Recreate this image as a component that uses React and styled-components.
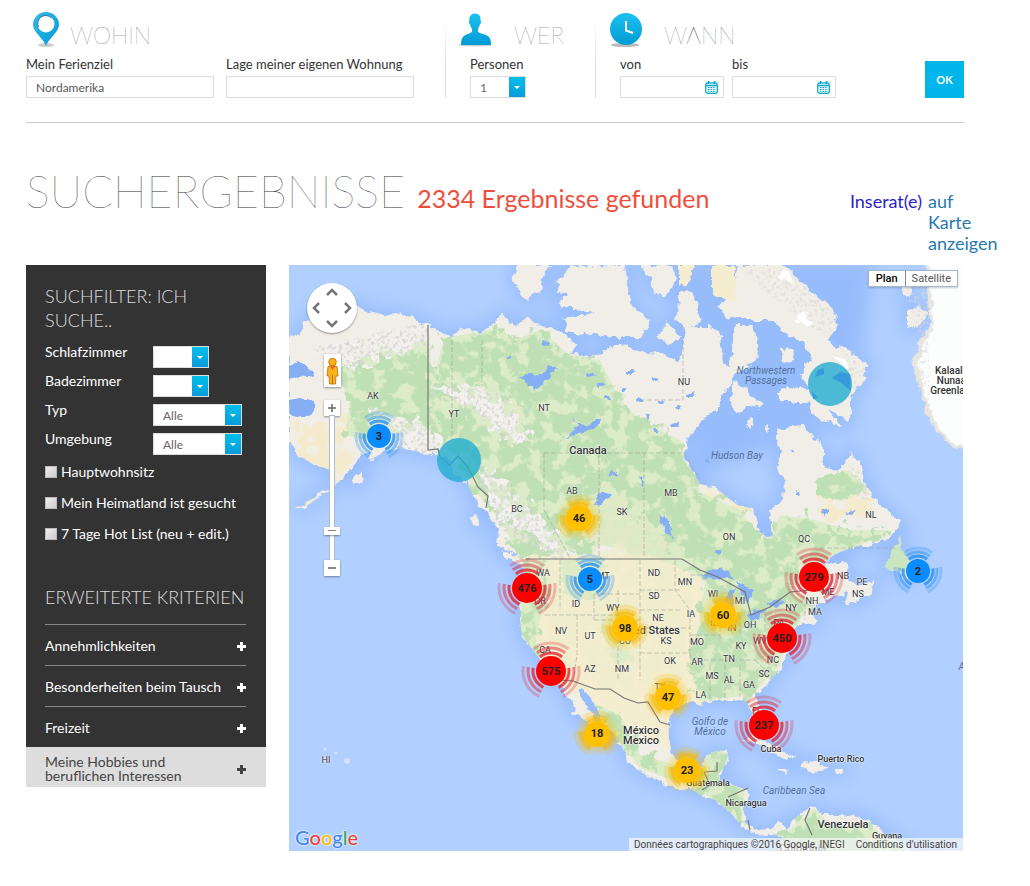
import React from 'react';
import styled, { createGlobalStyle } from 'styled-components';

const GlobalStyle = createGlobalStyle`
  *, *::before, *::after { box-sizing: border-box; }
  body { margin: 0; background: #fff; color: #333; font-family: Lato, "Open Sans", sans-serif; font-size: 13px; }
  button, input, select { font: inherit; color: inherit; }
`;

const Page = styled.div`
  padding: 12px 0 35px 26px;
`;

const SearchBar = styled.form`
  display: flex;
  align-items: flex-end;
  margin-right: 66px;
  padding-bottom: 24px;
  border-bottom: 1px solid #ccc;
`;

const Group = styled.fieldset`
  margin: 0;
  min-width: 0;
  border: 0;
  padding: 0 ${p => p.$end || 0}px 0 ${p => p.$start || 0}px;
  background: ${p => (p.$start ? 'linear-gradient(#fff 10%, #ddd 60%) left / 1px 100% no-repeat' : 'none')};
`;

const GroupHead = styled.div`
  display: flex;
  align-items: flex-start;
  gap: ${p => p.$gap}px;
  height: 44px;
`;

const GroupTitle = styled.h2`
  margin: 8px 0 0;
  font-size: 23px;
  line-height: 30px;
  font-weight: 100;
`;

const Fields = styled.div`
  display: flex;
  gap: ${p => p.$gap || 0}px;
  padding-left: ${p => p.$inset || 0}px;
`;

const Field = styled.div`
  display: flex;
  flex-direction: column;
  width: ${p => p.$w}px;
`;

const FieldLabel = styled.label`
  height: 20px;
  line-height: 16px;
  white-space: nowrap;
`;

const TextBox = styled.input`
  width: 100%;
  height: 22px;
  padding: 0 9px;
  border: 1px solid #ddd;
  background: #fff;
  color: #555;
  font-size: 12px;
  outline: none;
`;

const DateBox = styled.div`
  display: flex;
  align-items: center;
  height: 22px;
  padding-right: 5px;
  border: 1px solid #ddd;
  input { flex: 1; min-width: 0; height: 20px; border: 0; outline: none; background: none; }
`;

const PlainButton = styled.button`
  display: flex;
  padding: 0;
  border: 0;
  background: none;
`;

const SelectShell = styled.div`
  position: relative;
  width: ${p => p.$w}px;
  height: 22px;
`;

const Select = styled.select`
  appearance: none;
  width: 100%;
  height: 22px;
  padding: 0 20px 0 9px;
  border: 1px solid #ddd;
  border-radius: 0;
  background: #fff;
  color: #666;
  font-size: 12px;
  outline: none;
`;

const SelectArrow = styled.span`
  position: absolute;
  top: 1px;
  right: 1px;
  display: flex;
  align-items: center;
  justify-content: center;
  width: 16px;
  height: 20px;
  background: linear-gradient(#00bfeb, #0a9bd8);
  pointer-events: none;
  &::after { content: ''; border: 3px solid transparent; border-top-color: #fff; border-bottom: 0; }
`;

const OkButton = styled.button`
  width: 39px;
  height: 37px;
  margin-left: auto;
  padding: 0;
  border: 0;
  background: #00b5e9;
  color: #fff;
  font-size: 11px;
  font-weight: 700;
`;

const ResultHead = styled.header`
  display: flex;
  align-items: baseline;
  margin: 40px 31px 14px 0;
  height: 88px;
`;

const ResultTitle = styled.h1`
  margin: 0 12px 0 0;
  font-size: 45px;
  line-height: 56px;
  font-weight: 100;
`;

const ResultCount = styled.p`
  margin: 0 auto 0 0;
  color: #ee4f3d;
  font-size: 25px;
  white-space: nowrap;
`;

const MapLinks = styled.p`
  display: flex;
  gap: 6px;
  margin: 0;
  padding-bottom: 4px;
  font-size: 18px;
  line-height: 21px;
`;

const MapLink = styled.a`
  width: ${p => (p.$w ? `${p.$w}px` : 'auto')};
  color: ${p => p.$color};
  text-decoration: none;
`;

const Content = styled.main`
  display: flex;
  align-items: flex-start;
  gap: 23px;
  margin-right: 67px;
`;

const Sidebar = styled.aside`
  flex: 0 0 240px;
  background: #333;
  color: #fff;
`;

const Filters = styled.form`
  padding: 19px 20px 0 19px;
`;

const SideTitle = styled.h2`
  margin: 0;
  font-size: 18px;
  line-height: 24px;
  font-weight: 300;
  color: #ddd;
`;

const FilterRows = styled.div`
  display: grid;
  gap: 7px;
  margin: 14px 0 1px;
`;

const FilterRow = styled.div`
  display: grid;
  grid-template-columns: 108px auto;
  height: 22px;
  label { line-height: 12px; font-size: 14px; }
`;

const Check = styled.label`
  display: flex;
  align-items: center;
  gap: 3px;
  height: 31px;
  font-size: 14px;
  white-space: nowrap;
`;

const CheckBox = styled.input`
  appearance: none;
  width: 12px;
  height: 12px;
  margin: 0 1px 0 0;
  border: 1px solid #bbb;
  background: linear-gradient(135deg, #eee, #ccc);
`;

const Criteria = styled.section`
  padding: 36px 20px 0 19px;
`;

const CriteriaList = styled.div`
  margin-top: 15px;
`;

const Accordion = styled.button`
  display: flex;
  align-items: center;
  justify-content: space-between;
  width: 100%;
  height: ${p => (p.$light ? 40 : 41)}px;
  padding: ${p => (p.$light ? '4px 20px 0 19px' : '2px 0 0')};
  border: 0;
  border-top: ${p => (p.$light ? '0' : '1px solid #888')};
  background: ${p => (p.$light ? '#ddd' : 'none')};
  color: ${p => (p.$light ? '#444' : '#fff')};
  font-size: 14px;
  line-height: 14px;
  text-align: left;
  white-space: nowrap;
`;

const MapFrame = styled.section`
  position: relative;
  flex: 1;
  min-width: 0;
  aspect-ratio: 674 / 586;
  overflow: hidden;
  background: #b3d1ff;
  font-family: Roboto, sans-serif;
  > svg { display: block; width: 100%; height: 100%; }
`;

const onMap = p => `
  position: absolute;
  left: ${((p.$x - 289) / 674) * 100}%;
  top: ${((p.$y - 265) / 586) * 100}%;
  transform: translate(-50%, -50%);
`;

const MapLabel = styled.span`
  ${onMap}
  color: ${p => (p.$kind === 'sea' ? '#54709c' : '#333')};
  font-size: ${p => ({ state: 9, town: 9, sea: 10, land: 10, country: 11 }[p.$kind])}px;
  font-style: ${p => (p.$kind === 'sea' ? 'italic' : 'normal')};
  font-weight: ${p => (p.$kind === 'state' || p.$kind === 'sea' ? 400 : 500)};
  line-height: 10px;
  text-align: center;
  text-shadow: ${p => (p.$kind === 'sea' ? 'none' : '0 0 2px #fff, 0 0 2px #fff')};
  white-space: pre;
`;

const ClusterPin = styled.button`
  ${onMap}
  width: 66px;
  height: 66px;
  padding: 0;
  border: 0;
  background: none;
  color: #222;
  font-size: 11px;
  font-weight: 700;
  svg { position: absolute; inset: 0; }
  span { position: relative; }
`;

const MapTypes = styled.div`
  position: absolute;
  top: 5px;
  right: 5px;
  display: flex;
  border: 1px solid #a5b5cc;
  background: #fff;
  box-shadow: 0 1px 2px #0003;
`;

const MapType = styled.button`
  height: 15px;
  padding: 0 ${p => (p.$active ? 7 : 6)}px;
  border: 0;
  border-left: ${p => (p.$active ? 0 : '1px solid #888')};
  background: none;
  color: ${p => (p.$active ? '#000' : '#555')};
  font-size: 11px;
  line-height: 15px;
  font-weight: ${p => (p.$active ? 500 : 400)};
`;

const MapTools = styled.div`
  position: absolute;
  top: 18px;
  left: 18px;
  display: flex;
  flex-direction: column;
  align-items: center;
  width: 50px;
`;

const PanPad = styled.div`
  display: grid;
  grid-template-columns: repeat(3, 15px);
  grid-template-rows: repeat(3, 15px);
  place-items: center;
  place-content: center;
  width: 50px;
  height: 50px;
  border-radius: 50%;
  background: #fff;
  box-shadow: 0 1px 2px #0006;
`;

const PanButton = styled(PlainButton)`
  grid-area: ${p => p.$area};
`;

const Pegman = styled(PlainButton)`
  justify-content: center;
  align-items: center;
  width: 17px;
  height: 33px;
  margin: 21px 0 13px;
  background: #fff;
  box-shadow: 0 1px 2px #0006;
`;

const ZoomButton = styled(PlainButton)`
  justify-content: center;
  align-items: center;
  width: 16px;
  height: 16px;
  background: #fff;
  box-shadow: 0 1px 2px #0006;
`;

const ZoomSlider = styled.input`
  appearance: none;
  writing-mode: vertical-lr;
  direction: rtl;
  width: 16px;
  height: 144px;
  margin: 0;
  background: none;
  &::-webkit-slider-runnable-track { width: 4px; background: #fff; box-shadow: 0 0 0 1px #a9bcd2; }
  &::-webkit-slider-thumb { appearance: none; width: 16px; height: 8px; margin-left: -6px; background: linear-gradient(#888, #888) center / 8px 1px no-repeat #fff; box-shadow: 0 1px 2px #0006; }
`;

const GoogleLogo = styled.a`
  position: absolute;
  left: 6px;
  bottom: 0;
  font-family: Lato, sans-serif;
  font-size: 20px;
  line-height: 28px;
  font-weight: 500;
  text-decoration: none;
  text-shadow: 0 0 2px #fff, 0 0 2px #fff;
`;

const Letter = styled.span`
  color: ${p => p.$c};
`;

const Credit = styled.div`
  position: absolute;
  right: 0;
  bottom: 0;
  display: flex;
  gap: 11px;
  height: 13px;
  padding: 0 6px 0 5px;
  background: #f5f5f5bb;
  color: #444;
  font-size: 10px;
  line-height: 13px;
  white-space: nowrap;
  a { color: inherit; text-decoration: none; }
`;

const PinIcon = () => (
  <svg width="36" height="36" viewBox="0 0 36 36" aria-hidden="true">
    <defs><linearGradient id="pinFill" x2="1" y2="1"><stop stopColor="#35bce9" /><stop offset="1" stopColor="#0099d4" /></linearGradient></defs>
    <ellipse cx="20" cy="33" rx="8" ry="2" fill="#bbb" opacity=".7" />
    <path d="M20 34C17 26 7 20 7 12.500a13 12.500 0 0 1 26 0C33 20 23 26 20 34Z" fill="url(#pinFill)" />
    <circle cx="20" cy="12" r="8.500" fill="#fff" />
    <path d="M12.500 15a8 8 0 0 1 13-9" fill="none" stroke="#2b6f96" strokeWidth="1" />
  </svg>
);

const PersonIcon = () => (
  <svg width="36" height="36" viewBox="0 0 36 36" aria-hidden="true">
    <defs><linearGradient id="manFill" x2="0" y2="1"><stop stopColor="#1bc1ee" /><stop offset="1" stopColor="#009bd6" /></linearGradient></defs>
    <ellipse cx="18" cy="33" rx="17" ry="1.500" fill="#ccc" />
    <path d="M18 1.500c4 0 6 3 5.500 7 1 .5.700 3-.7 4-.4 2-1 3-1.800 4v3c2 3 10 2 12 7 .8 2 1 4 1 6.500H4c0-2.500.3-4.500 1-6.500 2-5 8-4 10-7v-3c-1-1-1.500-2-1.900-4-1.300-1-1.700-3.500-.7-4-.4-4 1.600-7 5.600-7Z" fill="url(#manFill)" />
  </svg>
);

const ClockIcon = () => (
  <svg width="36" height="36" viewBox="0 0 36 36" aria-hidden="true">
    <ellipse cx="16" cy="33" rx="14" ry="2" fill="#bbb" />
    <circle cx="17" cy="17" r="16" fill="url(#manFill)" />
    <path d="M17 9v9.500l7 2.500" fill="none" stroke="#fff" strokeWidth="2" />
  </svg>
);

const CalendarIcon = () => (
  <svg width="13" height="13" viewBox="0 0 13 13" aria-hidden="true">
    <rect x=".7" y="1.800" width="11.600" height="10.500" rx="2" fill="#e8f9fe" stroke="#08a5cc" strokeWidth="1.200" />
    <path d="M1 4.500h11M3.500 0v3M9.500 0v3" stroke="#08a5cc" strokeWidth="1.500" />
    <path d="M3 6.500h7M3 8.500h7M3 10.500h7" stroke="#08a5cc" strokeWidth="1" strokeDasharray="1.500 1" />
  </svg>
);

const PlusIcon = () => (
  <svg width="9" height="9" viewBox="0 0 9 9" aria-hidden="true"><path d="M4.500 0v9M0 4.500h9" stroke="currentColor" strokeWidth="3" /></svg>
);

const arrowPaths = {
  up: ['1 / 2', 'M2 9l5-5 5 5'],
  left: ['2 / 1', 'M9 2L4 7l5 5'],
  right: ['2 / 3', 'M5 2l5 5-5 5'],
  down: ['3 / 2', 'M2 5l5 5 5-5'],
};

const labels = [
  [373, 396, 'AK'], [454, 414, 'YT'], [544, 408, 'NT'], [684, 382, 'NU'], [572, 491, 'AB'], [517, 509, 'BC'], [622, 512, 'SK'],
  [671, 493, 'MB'], [729, 537, 'ON'], [804, 539, 'QC'], [871, 515, 'NL'], [543, 573, 'WA'], [540, 601, 'OR'], [576, 604, 'ID'],
  [603, 576, 'MT'], [654, 573, 'ND'], [685, 582, 'MN'], [654, 596, 'SD'], [613, 608, 'WY'], [561, 631, 'NV'], [590, 636, 'UT'],
  [545, 650, 'CA'], [590, 669, 'AZ'], [622, 669, 'NM'], [658, 618, 'NE'], [691, 614, 'IA'], [713, 594, 'WI'], [740, 601, 'MI'],
  [625, 641, 'CO'], [666, 641, 'KS'], [697, 642, 'MO'], [741, 646, 'KY'], [670, 661, 'OK'], [697, 662, 'AR'], [729, 659, 'TN'],
  [712, 676, 'MS'], [729, 680, 'AL'], [749, 685, 'GA'], [764, 674, 'SC'], [773, 660, 'NC'], [760, 641, 'WV'], [779, 623, 'PA'],
  [750, 625, 'OH'], [732, 628, 'IN'], [714, 623, 'IL'], [791, 608, 'NY'], [812, 601, 'NH'], [815, 612, 'MA'], [828, 592, 'ME'],
  [843, 576, 'NB'], [862, 582, 'PE'], [858, 594, 'NS'], [660, 687, 'TX'], [701, 695, 'LA'], [757, 711, 'FL'], [326, 760, 'HI'],
  [588, 451, 'Canada', 'country'], [647, 631, 'United States', 'country'], [641, 731, 'México', 'country'], [641, 741, 'Mexico', 'country'],
  [771, 749, 'Cuba', 'town'], [841, 759, 'Puerto Rico', 'town'], [708, 783, 'Guatemala', 'town'], [746, 803, 'Nicaragua', 'town'],
  [843, 825, 'Venezuela', 'country'], [887, 836, 'Guyana', 'town'], [803, 849, 'Colombia', 'country'],
  [953, 381, 'Kalaallit\nNunaat\nGreenland', 'land'],
  [766, 376, 'Northwestern\nPassages', 'sea'], [737, 456, 'Hudson Bay', 'sea'], [710, 727, 'Golfo de\nMéxico', 'sea'],
  [794, 791, 'Caribbean Sea', 'sea'], [975, 667, 'Atlantic', 'sea'],
];

const clusters = [
  [379, 436, 3, 'blue'], [590, 579, 5, 'blue'], [918, 571, 2, 'blue'],
  [579, 518, 46, 'gold'], [625, 628, 98, 'gold'], [723, 615, 60, 'gold'], [668, 697, 47, 'gold'], [597, 734, 18, 'gold'], [687, 770, 23, 'gold'],
  [527, 588, 476, 'red'], [551, 671, 575, 'red'], [814, 577, 279, 'red'], [782, 638, 450, 'red'], [764, 725, 237, 'red'],
];

const tones = {
  blue: { fill: '#0a8cff', arc: '#2490f5', r: 12, rings: [15, 19, 23], alpha: [0.8, 0.5, 0.28] },
  gold: { fill: '#ffc000', arc: '#f5b800', r: 13, rings: [15, 18, 22], alpha: [0.7, 0.4, 0.2] },
  red: { fill: '#ff0000', arc: '#e32636', r: 15, rings: [18, 23, 28], alpha: [0.8, 0.5, 0.28] },
};

const arc = (r, from, to) => {
  const at = a => `${33 + r * Math.sin((a * Math.PI) / 180)} ${33 - r * Math.cos((a * Math.PI) / 180)}`;
  return `M${at(from)}A${r} ${r} 0 0 1 ${at(to)}`;
};

const Cluster = ({ x, y, count, tone }) => {
  const t = tones[tone];
  return (
    <ClusterPin type="button" $x={x} $y={y}>
      <svg width="66" height="66" viewBox="0 0 66 66" aria-hidden="true">
        {tone === 'gold' && <circle cx="33" cy="33" r="23" fill="url(#goldGlow)" />}
        {t.rings.map((r, i) => (
          <path key={r} d={arc(r, -38, 38) + arc(r, 80, 155) + arc(r, 205, 280)} fill="none" stroke={t.arc} strokeWidth="3" opacity={t.alpha[i]} />
        ))}
        <circle cx="33" cy="33" r={t.r} fill={t.fill} />
      </svg>
      <span>{count}</span>
    </ClusterPin>
  );
};

const mainland = 'M289 338L300 335L306 322L318 310L340 304L358 305L366 311L385 314L405 315L417 320L428 325L440 331L452 337L458 330L470 328L480 334L490 327L497 318L503 313L508 322L516 326L525 318L535 325L548 326L560 331L568 338L577 345L570 352L590 357L605 350L620 344L633 350L663 354L675 359L680 362L683 345L687 328L700 325L710 325L720 335L723 362L730 365L733 342L735 325L753 325L757 342L758 362L737 372L732 382L723 395L717 409L703 419L688 439L683 459L695 475L700 485L717 489L737 505L753 509L755 522L767 539L773 535L770 509L783 499L785 482L775 465L780 449L777 429L800 425L810 432L823 449L823 465L833 472L847 462L850 450L860 465L867 489L877 502L900 522L893 535L873 545L853 547L833 555L822 566L835 560L848 563L844 572L850 582L860 586L874 580L872 592L855 602L845 602L848 592L832 597L815 605L810 615L818 622L800 625L793 634L789 645L787 660L778 672L765 685L757 693L757 702L764 717L765 735L758 733L752 718L748 703L738 700L725 702L715 700L700 706L693 701L684 704L674 708L668 720L669 740L673 756L682 764L695 767L702 767L706 755L718 750L729 752L725 765L718 775L722 784L735 786L748 790L746 805L742 815L746 823L755 829L770 828L781 823L786 830L795 818L810 808L815 806L820 815L840 815L860 817L872 823L888 836L903 843L912 851L780 851L783 836L770 835L755 834L742 826L730 812L715 800L700 795L690 788L675 788L655 780L640 770L628 762L626 752L620 745L613 733L603 722L597 708L590 697L582 688L577 690L584 703L594 715L602 728L606 738L601 738L589 723L573 714L576 708L568 696L560 686L548 675L543 665L536 654L530 646L522 635L520 620L521 605L524 590L525 575L523 562L512 552L500 547L495 540L500 530L490 518L480 505L470 490L465 480L455 475L450 460L440 455L428 455L412 450L395 448L380 455L368 460L370 450L355 462L345 475L335 485L318 498L305 507L295 509L310 500L328 488L335 472L325 468L310 462L298 456L292 445L289 440Z';

const islands = [
  'M517 265L513 282L520 292L527 300L533 295L540 292L542 279L552 265Z',
  'M572 266L558 279L557 292L567 295L555 305L575 309L592 312L578 317L562 319L568 325L565 332L592 335L615 337L640 337L645 329L650 322L632 305L628 285L625 265Z',
  'M640 265L650 279L653 290L663 297L673 289L675 275L670 265Z',
  'M680 292L675 319L687 329L700 322L697 302L688 289Z',
  'M660 329L668 322L680 337L670 344L658 339Z',
  'M712 265L712 295L737 302L735 272L733 265Z',
  'M680 265H694L690 281L680 285Z',
  'M737 265L735 295L717 305L723 315L747 320L773 320L787 335L803 342L810 359L800 375L808 389L787 387L777 392L782 402L807 402L813 415L843 429L827 409L850 420L850 402L855 392L867 372L867 365L847 349L827 342L838 325L833 309L810 292L793 272L783 265Z',
  'M733 382L730 405L737 412L753 405L762 409L763 405L750 395L740 385Z',
  'M781 350L788 345L794 350L793 360L785 363L781 357ZM745 424L752 418L756 423L750 428ZM765 427L769 424L770 431L767 434Z',
  'M885 567L895 545L902 537L900 551L912 560L916 575L907 579L895 571Z',
  'M500 550L510 553L524 562L522 566L508 559ZM472 516L477 515L478 527L474 526ZM352 480L362 471L366 478L356 485Z',
  'M740 739L755 737L770 744L784 751L794 757L784 759L770 751L755 743ZM801 764L813 761L830 769L822 772L802 770ZM776 769L786 769L784 773ZM836 769L845 769L844 773L837 773Z',
  'M903 282L913 282L911 297L903 295ZM907 310L920 307L928 315L915 329L907 325Z',
];

const forests = [
  'M330 365L370 355L428 340L435 400L430 445L410 430L370 440L345 435L350 400Z',
  'M445 338L500 328L515 340L540 330L570 355L600 360L620 400L640 420L680 440L700 492L740 510L765 545L780 515L815 520L850 530L890 530L860 545L830 558L800 565L790 590L815 600L785 640L780 665L755 692L735 697L700 700L690 670L700 620L705 580L650 555L600 545L540 555L520 555L500 520L470 485L460 455L435 440L432 380Z',
  'M520 560L545 560L550 580L535 640L545 660L535 655L521 635ZM560 560L600 558L610 580L590 600L565 595ZM598 615L625 610L632 660L615 665Z',
  'M597 705L620 715L640 755L680 766L702 768L706 755L728 752L722 780L745 790L742 820L755 830L740 822L700 790L640 768L610 730Z',
  'M784 835L815 808L830 825L870 825L905 850H780Z',
  'M818 478L850 470L865 490L845 500L822 495Z',
];

const dryLands = [
  'M435 400L480 385L520 400L525 440L500 420L470 410Z',
  'M545 560L650 558L690 580L690 640L670 690L640 685L600 690L560 685L550 650Z',
  'M605 485L650 520L690 565L600 560L580 530Z',
];

const lakes = [
  'M518 378L532 372L535 378L550 365L557 368L545 383L535 392L531 386Z',
  'M565 440L578 425L570 417L583 425L602 420L593 430L580 434Z',
  'M660 515L670 520L674 538L665 534ZM645 412L650 414L647 423ZM640 478L645 475L643 487Z',
  'M700 575L713 568L726 570L735 580L724 577L710 579Z',
  'M728 592L736 586L733 604L727 615L723 604ZM737 582L752 588L748 604L742 595Z',
  'M749 614L767 609L758 619L749 618ZM768 602L784 600L780 605L770 607Z',
  'M289 365L298 361L310 370L315 378L300 376L289 380ZM289 400L304 397L316 404L306 418L289 414Z',
  'M593 504L598 494L612 495L602 503ZM608 478L612 470L618 475ZM822 510L829 508L826 516L821 515ZM846 513L857 510L852 516Z',
];

const ponds = [[630, 372], [655, 380], [662, 402], [655, 432], [678, 408], [675, 425], [600, 385], [590, 375], [607, 397], [510, 358], [545, 343], [793, 452], [797, 494], [718, 552], [708, 460], [622, 390], [640, 400], [690, 395]];

const stateLines = 'M544 453H685M544 453V510L570 558M599 453V558M644 453V558M684 453L700 480M452 340V440M482 340V380M560 560V610M545 615H618M577 615V655L573 682M594 594V620M618 590V680M594 594H640M594 620H640M640 560V680M640 590H680M640 610H680M646 628H690M640 653H690M675 560V590L690 610V660M690 575H710M690 635H720M720 620V640M690 660H755M710 665V700M725 665V700M740 665V697M755 660L770 675M740 615V635M765 610V630M760 640H785M805 590V620M820 548H895M683 340V400H640';

const MapDrawing = () => (
  <svg viewBox="289 265 674 586" preserveAspectRatio="xMidYMid slice" aria-hidden="true">
    <defs>
      <radialGradient id="goldGlow"><stop offset=".5" stopColor="#ffc000" stopOpacity=".5" /><stop offset="1" stopColor="#ffc000" stopOpacity="0" /></radialGradient>
      <filter id="shelf" x="-10%" y="-10%" width="120%" height="120%"><feGaussianBlur stdDeviation="9" /></filter>
      <filter id="coast"><feTurbulence type="fractalNoise" baseFrequency=".12" numOctaves="3" seed="4" /><feDisplacementMap in="SourceGraphic" scale="9" xChannelSelector="R" yChannelSelector="G" /></filter>
      <filter id="patchy" x="-5%" y="-5%" width="110%" height="110%">
        <feTurbulence type="fractalNoise" baseFrequency=".07" numOctaves="5" seed="9" result="n" />
        <feDisplacementMap in="SourceGraphic" in2="n" scale="34" xChannelSelector="R" yChannelSelector="G" result="d" />
        <feColorMatrix in="n" type="matrix" values="0 0 0 0 0  0 0 0 0 0  0 0 0 0 0  0 0 8 0 -3" result="m" />
        <feComposite in="d" in2="m" operator="in" />
      </filter>
      <filter id="ridges">
        <feTurbulence type="fractalNoise" baseFrequency=".28" numOctaves="3" seed="2" result="n" />
        <feColorMatrix in="n" type="matrix" values="0 0 0 0 .7  0 0 0 0 .69  0 0 0 0 .68  5 0 0 0 -2.500" result="m" />
        <feComposite in="m" in2="SourceGraphic" operator="in" />
      </filter>
      <clipPath id="landClip"><path d={mainland} /></clipPath>
    </defs>
    <rect x="289" y="265" width="674" height="586" fill="#b1d0ff" />
    <g fill="#8db4fa" stroke="#8db4fa" strokeWidth="10" filter="url(#shelf)" opacity=".7">
      <path d={mainland} /><path d={islands.join('')} /><path d="M690 265H870L850 400L800 430L700 470Z" />
    </g>
    <g filter="url(#coast)">
      <path d={mainland} fill="#f0eee6" />
      <path d={islands.join('')} fill="#f0eee6" />
      <path d={islands[5] + islands[6]} fill="#f5edcf" />
      <path d="M885 567L895 545L902 537L900 551L912 560L916 575Z" fill="#cbe5bf" />
      <path d="M927 260L930 300L931 330L920 345L915 365L922 389L927 409L937 429L947 442L970 452V260Z" fill="#fcfdfd" stroke="#e8e6df" strokeWidth="4" />
    </g>
    <g clipPath="url(#landClip)">
      <path d="M515 555L700 555L710 690L670 750L590 710L540 660Z" fill="#f4edcf" />
      <path d="M289 420L345 415L350 465L300 510ZM560 400L605 400L615 440L590 430ZM650 460L700 475L750 500V520L690 490ZM815 495L875 490V520L830 520Z" fill="#f5eacb" filter="url(#patchy)" />
      <path d={forests.join('')} fill="#dcecc8" />
      <path d={forests.join('')} fill="#bfdfb5" filter="url(#patchy)" />
      <path d={dryLands.join('')} fill="#eeedcd" opacity=".75" filter="url(#patchy)" />
      <path d="M310 348L428 322L430 345L350 368ZM370 410L420 425L455 450L430 456L400 448ZM432 385L500 390L530 440L510 445L470 410ZM480 465L560 535L565 560L500 520Z" fill="#f3f1ed" filter="url(#patchy)" />
      <path d="M310 348L428 322L430 345L350 368ZM365 405L420 425L455 455L430 458L390 448ZM432 385L500 390L530 440L510 445L470 410ZM470 455L560 535L565 565L500 530Z" filter="url(#ridges)" />
    </g>
    <path d="M740 270L783 268L835 310L830 340L867 370L850 395L845 350L800 320ZM847 460L860 470L875 505L858 495ZM903 280L928 275L930 420L955 445L940 440L918 390L920 340Z" filter="url(#ridges)" opacity=".6" />
    <path d="M795 319L800 313L805 314L812 325L808 328L803 323ZM833 357L840 358L848 364L846 368L838 363ZM778 275L784 271L790 274L794 284L787 282Z" fill="#fff" filter="url(#coast)" />
    <g fill="#86aef5" filter="url(#coast)">
      <path d={lakes.join('')} />
      {ponds.map(([x, y]) => <ellipse key={`${x}-${y}`} cx={x} cy={y} rx="3" ry="2" />)}
    </g>
    <path d={stateLines} fill="none" stroke="#9a9a92" strokeWidth=".8" strokeDasharray="5 2" opacity=".65" />
    <path d="M428 325V450L438 449L440 457L450 465L458 456L468 467L478 487L488 496L486 508M526 559H682L700 570L718 577L745 592L751 615L770 607L790 592L810 590L822 591L834 588M548 679L573 681L595 689H610L624 698L638 703L648 702L660 722L670 725M704 772L717 771V762M704 772L710 785L702 790M728 797L748 788M748 820L750 830M810 808L805 820L812 835" fill="none" stroke="#777" strokeWidth="1.200" />
    <g fill="#d3e2f8"><circle cx="347" cy="761" r="3" /><circle cx="336" cy="753" r="1.500" /><circle cx="325" cy="749" r="1.500" /></g>
    <g fill="#1eaccf" opacity=".78"><circle cx="459" cy="460" r="22" /><circle cx="830" cy="384" r="22" /></g>
    <path d="M818 370L824 368L824 374L815 377ZM840 372L850 374L851 391L840 382L832 378ZM812 391L818 398L813 399Z" fill="#379bdb" />
  </svg>
);

const Dropdown = ({ id, w, children }) => (
  <SelectShell $w={w}><Select id={id}>{children}</Select><SelectArrow /></SelectShell>
);

const DateField = ({ id, label, w }) => (
  <Field $w={w}>
    <FieldLabel htmlFor={id}>{label}</FieldLabel>
    <DateBox><input id={id} type="text" /><PlainButton type="button" aria-label={`Kalender ${label}`}><CalendarIcon /></PlainButton></DateBox>
  </Field>
);

const filterRows = [['rooms', 'Schlafzimmer', 56, ''], ['baths', 'Badezimmer', 56, ''], ['type', 'Typ', 89, 'Alle'], ['area', 'Umgebung', 89, 'Alle']];
const checks = ['Hauptwohnsitz', 'Mein Heimatland ist gesucht', '7 Tage Hot List (neu + edit.)'];
const criteria = ['Annehmlichkeiten', 'Besonderheiten beim Tausch', 'Freizeit'];
const logo = [['G', '#4285f4'], ['o', '#ea4335'], ['o', '#fbbc05'], ['g', '#4285f4'], ['l', '#34a853'], ['e', '#ea4335']];

export default function App() {
  return (
    <>
      <GlobalStyle />
      <Page>
        <SearchBar onSubmit={e => e.preventDefault()}>
          <Group $end={31}>
            <GroupHead $gap={8}><PinIcon /><GroupTitle>WOHIN</GroupTitle></GroupHead>
            <Fields $gap={12}>
              <Field $w={188}><FieldLabel htmlFor="dest">Mein Ferienziel</FieldLabel><TextBox id="dest" defaultValue="Nordamerika" /></Field>
              <Field $w={188}><FieldLabel htmlFor="own">Lage meiner eigenen Wohnung</FieldLabel><TextBox id="own" /></Field>
            </Fields>
          </Group>
          <Group $start={12} $end={31}>
            <GroupHead $gap={21}><PersonIcon /><GroupTitle>WER</GroupTitle></GroupHead>
            <Fields $inset={13}>
              <Field $w={56}><FieldLabel htmlFor="persons">Personen</FieldLabel><Dropdown id="persons" w={56}><option>1</option><option>2</option></Dropdown></Field>
            </Fields>
          </Group>
          <Group $start={14}>
            <GroupHead $gap={19}><ClockIcon /><GroupTitle>WANN</GroupTitle></GroupHead>
            <Fields $gap={8} $inset={11}><DateField id="from" label="von" w={104} /><DateField id="to" label="bis" w={104} /></Fields>
          </Group>
          <OkButton type="submit">OK</OkButton>
        </SearchBar>

        <ResultHead>
          <ResultTitle>SUCHERGEBNISSE</ResultTitle>
          <ResultCount>2334 Ergebnisse gefunden</ResultCount>
          <MapLinks>
            <MapLink href="#list" $color="#2a1fc8">Inserat(e)</MapLink>
            <MapLink href="#map" $color="#2878ad" $w={71}>auf Karte anzeigen</MapLink>
          </MapLinks>
        </ResultHead>

        <Content>
          <Sidebar>
            <Filters>
              <SideTitle>SUCHFILTER: ICH SUCHE..</SideTitle>
              <FilterRows>
                {filterRows.map(([id, label, w, value]) => (
                  <FilterRow key={id}><label htmlFor={id}>{label}</label><Dropdown id={id} w={w}><option>{value}</option></Dropdown></FilterRow>
                ))}
              </FilterRows>
              {checks.map(text => <Check key={text}><CheckBox type="checkbox" />{text}</Check>)}
            </Filters>
            <Criteria>
              <SideTitle>ERWEITERTE KRITERIEN</SideTitle>
              <CriteriaList>
                {criteria.map(text => <Accordion key={text} type="button">{text}<PlusIcon /></Accordion>)}
              </CriteriaList>
            </Criteria>
            <Accordion type="button" $light><span>Meine Hobbies und<br />beruflichen Interessen</span><PlusIcon /></Accordion>
          </Sidebar>

          <MapFrame id="map" aria-label="Karte">
            <MapDrawing />
            {labels.map(([x, y, text, kind]) => <MapLabel key={`${text}-${x}`} $x={x} $y={y} $kind={kind || 'state'}>{text}</MapLabel>)}
            {clusters.map(([x, y, count, tone]) => <Cluster key={count} x={x} y={y} count={count} tone={tone} />)}
            <MapTools>
              <PanPad>
                {Object.entries(arrowPaths).map(([name, [area, d]]) => (
                  <PanButton key={name} type="button" aria-label={name} $area={area}>
                    <svg width="14" height="14" viewBox="0 0 14 14"><path d={d} fill="none" stroke="#777" strokeWidth="2.500" /></svg>
                  </PanButton>
                ))}
              </PanPad>
              <Pegman type="button" aria-label="Street View">
                <svg width="13" height="28" viewBox="0 0 13 28">
                  <path d="M2 9.500Q6.500 7 11 9.500L12 19H10L9.500 27H3.500L3 19H1Z" fill="#fbb117" stroke="#b86e0c" strokeWidth=".8" />
                  <path d="M6.500 18v9" stroke="#b86e0c" /><path d="M3.500 9L6.500 13L9.500 9Z" fill="#ee6538" />
                  <circle cx="6.500" cy="5" r="3.800" fill="#fbb117" stroke="#b86e0c" strokeWidth=".8" />
                </svg>
              </Pegman>
              <ZoomButton type="button" aria-label="Vergrößern"><svg width="10" height="10"><path d="M5 1v8M1 5h8" stroke="#666" strokeWidth="1.500" /></svg></ZoomButton>
              <ZoomSlider type="range" min="0" max="16" defaultValue="3" aria-label="Zoom" />
              <ZoomButton type="button" aria-label="Verkleinern"><svg width="10" height="10"><path d="M1 5h8" stroke="#666" strokeWidth="1.500" /></svg></ZoomButton>
            </MapTools>
            <MapTypes><MapType type="button" $active>Plan</MapType><MapType type="button">Satellite</MapType></MapTypes>
            <GoogleLogo href="#google">{logo.map(([c, color], i) => <Letter key={i} $c={color}>{c}</Letter>)}</GoogleLogo>
            <Credit><span>Données cartographiques ©2016 Google, INEGI</span><a href="#terms">Conditions d'utilisation</a></Credit>
          </MapFrame>
        </Content>
      </Page>
    </>
  );
}
